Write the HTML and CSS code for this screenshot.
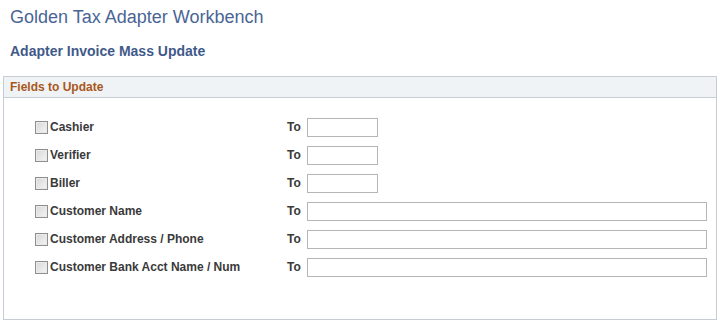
FILE: index.html
```html
<!DOCTYPE html>
<html lang="en">
<head>
    <meta charset="UTF-8">
    <title>Adapter Invoice Mass Update</title>
    <link rel="stylesheet" href="styles.css">
</head>
<body>
    <div class="page">
        <h1 class="page-title">Golden Tax Adapter Workbench</h1>
        <h2 class="page-subtitle">Adapter Invoice Mass Update</h2>

        <div class="group-box">
            <div class="group-header">Fields to Update</div>
            <div class="group-body">
                <div class="field-row">
                    <label class="field-check"><span class="checkbox"></span>Cashier</label>
                    <span class="to-label">To</span>
                    <span class="text-input short"></span>
                </div>
                <div class="field-row">
                    <label class="field-check"><span class="checkbox"></span>Verifier</label>
                    <span class="to-label">To</span>
                    <span class="text-input short"></span>
                </div>
                <div class="field-row">
                    <label class="field-check"><span class="checkbox"></span>Biller</label>
                    <span class="to-label">To</span>
                    <span class="text-input short"></span>
                </div>
                <div class="field-row">
                    <label class="field-check"><span class="checkbox"></span>Customer Name</label>
                    <span class="to-label">To</span>
                    <span class="text-input long"></span>
                </div>
                <div class="field-row">
                    <label class="field-check"><span class="checkbox"></span>Customer Address / Phone</label>
                    <span class="to-label">To</span>
                    <span class="text-input long"></span>
                </div>
                <div class="field-row">
                    <label class="field-check"><span class="checkbox"></span>Customer Bank Acct Name / Num</label>
                    <span class="to-label">To</span>
                    <span class="text-input long"></span>
                </div>
            </div>
        </div>
    </div>
</body>
</html>
```

FILE: styles.css
```css
/* Base page setup */
html, body {
    margin: 0;
    padding: 0;
    background-color: #ffffff;
    font-family: "Liberation Sans", Arial, sans-serif;
}
.page {
    padding: 0 0 0 3px;
}
/* Page headings */
.page-title {
    margin: 0;
    padding: 7px 0 0 7px;
    height: 30px;
    box-sizing: border-box;
    font-size: 18px;
    font-weight: normal;
    line-height: 21px;
    color: #4a6595;
}
.page-subtitle {
    margin: 0;
    padding: 13px 0 0 7px;
    height: 46px;
    box-sizing: border-box;
    font-size: 14px;
    font-weight: bold;
    line-height: 16px;
    color: #3f5a8a;
}
/* Group box */
.group-box {
    width: 714px;
    height: 244px;
    box-sizing: border-box;
    border: 1px solid #c8ccd4;
}
.group-header {
    height: 21px;
    box-sizing: border-box;
    padding: 2px 0 0 6px;
    background-color: #eff3f5;
    border-bottom: 1px solid #c8ccd4;
    font-size: 12px;
    font-weight: bold;
    line-height: 16px;
    color: #a9571c;
}
.group-body {
    padding: 15px 0 0 31px;
}
/* Field rows */
.field-row {
    display: flex;
    align-items: center;
    height: 28px;
}
.field-check {
    display: flex;
    align-items: center;
    width: 252px;
    font-size: 12px;
    font-weight: bold;
    color: #3a3a3a;
}
.checkbox {
    width: 13px;
    height: 13px;
    box-sizing: border-box;
    margin-right: 2px;
    border: 1px solid #8f8f8f;
    background: linear-gradient(135deg, #d8d8d8, #f4f4f4);
    box-shadow: inset 0 0 0 1px #eaeaea;
}
.to-label {
    width: 20px;
    font-size: 12px;
    font-weight: bold;
    color: #3a3a3a;
}
.text-input {
    height: 19px;
    box-sizing: border-box;
    border: 1px solid #b5b5b5;
    background-color: #ffffff;
}
.text-input.short {
    width: 71px;
}
.text-input.long {
    width: 400px;
}
```
